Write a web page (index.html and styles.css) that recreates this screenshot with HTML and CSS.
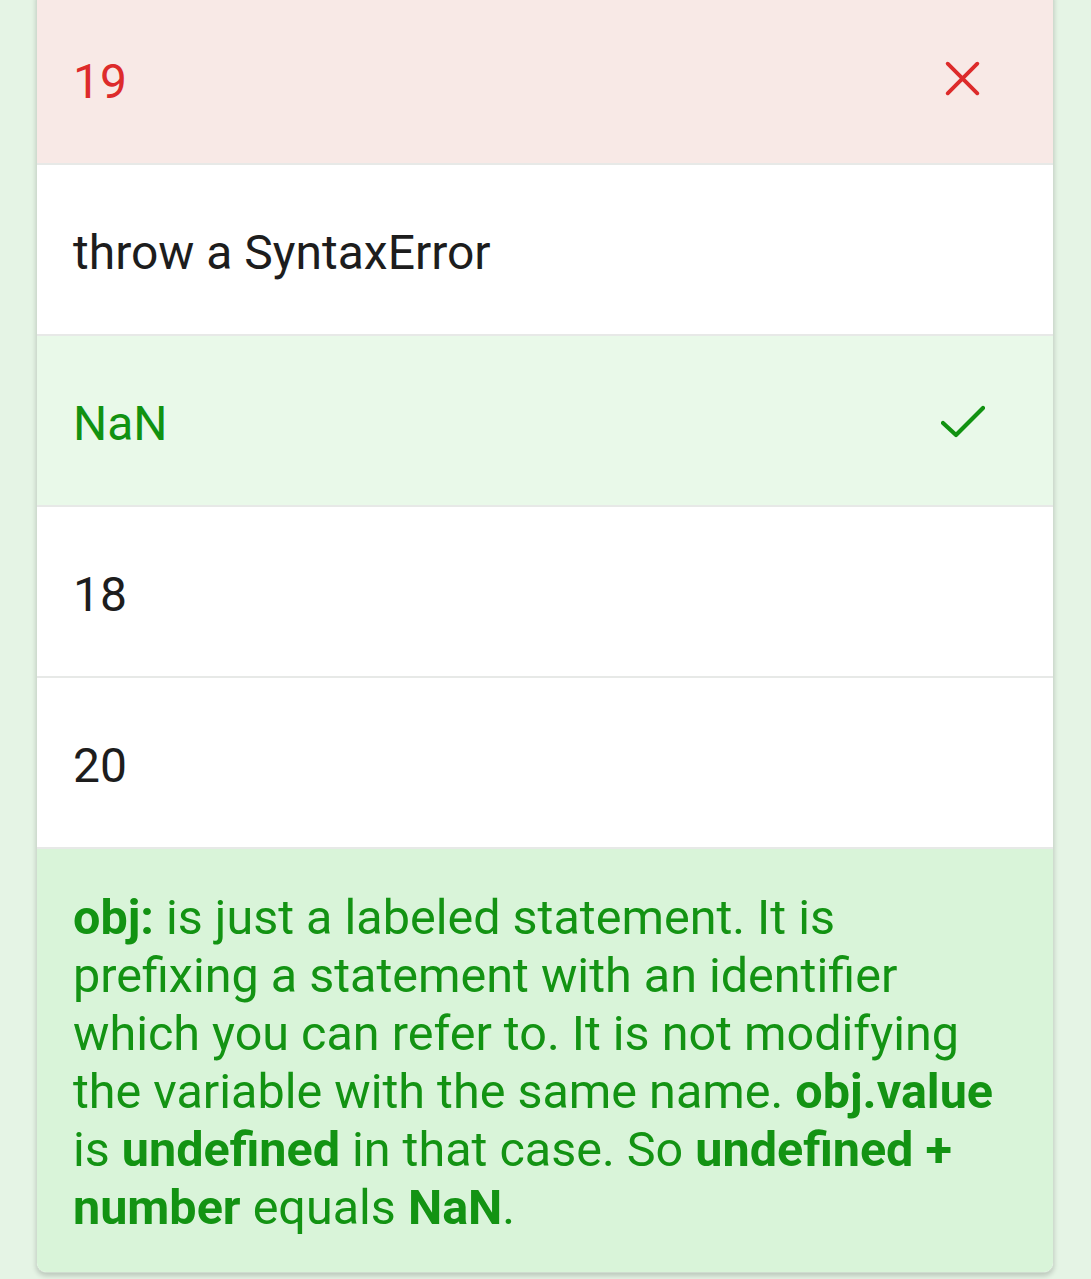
FILE: index.html
```html
<!DOCTYPE html>
<html>
<head>
<meta charset="utf-8">
<link rel="stylesheet" href="styles.css">
</head>
<body>
<div class="card">
  <div class="opt opt-wrong">
    <span class="label">19</span>
    <svg class="icon" viewBox="0 0 40 40"><path d="M4 4 L36 36 M36 4 L4 36" stroke="#dd2b2b" stroke-width="4.2" stroke-linecap="round" fill="none"/></svg>
  </div>
  <div class="opt"><span class="label">throw a SyntaxError</span></div>
  <div class="opt opt-right">
    <span class="label">NaN</span>
    <svg class="icon" viewBox="0 0 44 40"><path d="M2 22 L15 34 L42 7" stroke="#119211" stroke-width="4.2" stroke-linecap="round" stroke-linejoin="round" fill="none"/></svg>
  </div>
  <div class="opt"><span class="label">18</span></div>
  <div class="opt"><span class="label">20</span></div>
  <div class="explain">
    <p><b>obj:</b> is just a labeled statement. It is prefixing a statement with an identifier which you can refer to. It is not modifying the variable with the same name. <b>obj.value</b> is <b>undefined</b> in that case. So <b>undefined + number</b> equals <b>NaN</b>.</p>
  </div>
</div>
</body>
</html>
```

FILE: styles.css
```css
html, body {
  margin: 0;
  padding: 0;
  background: #e5f4e5;
}
body {
  font-family: Roboto, "Noto Sans", sans-serif;
  padding: 0 37px 0 36px;
  height: 1279px;
  overflow: hidden;
}
.card {
  margin-top: -6px;
  background: #ffffff;
  border: 1px solid #cfdccf;
  border-top: none;
  border-radius: 0 0 10px 10px;
  box-shadow: 0 3px 5px rgba(0,0,0,0.18);
  overflow: hidden;
}
.opt {
  display: flex;
  align-items: center;
  justify-content: space-between;
  padding: 6px 72px 0 36px;
  box-sizing: border-box;
  height: 171px;
  border-bottom: 2px solid #e7e9e7;
  font-size: 48px;
  color: #1d1d1d;
}
.opt-wrong {
  background: #f8e9e6;
  color: #dd2b2b;
}
.opt-right {
  background: #e9f9e9;
  color: #119211;
}
.opt:last-of-type {
  border-bottom: none;
}
.icon {
  width: 37px;
  height: 37px;
  margin-top: -6px;
}
.opt-right .icon {
  width: 44px;
  height: 40px;
  margin-right: -4px;
}
.explain {
  background: #d9f4d9;
  color: #139313;
  padding: 40px 36px 35px 36px;
  font-size: 48.5px;
  line-height: 58px;
}
.explain p {
  margin: 0;
}
.explain b {
  font-weight: 700;
}
```
